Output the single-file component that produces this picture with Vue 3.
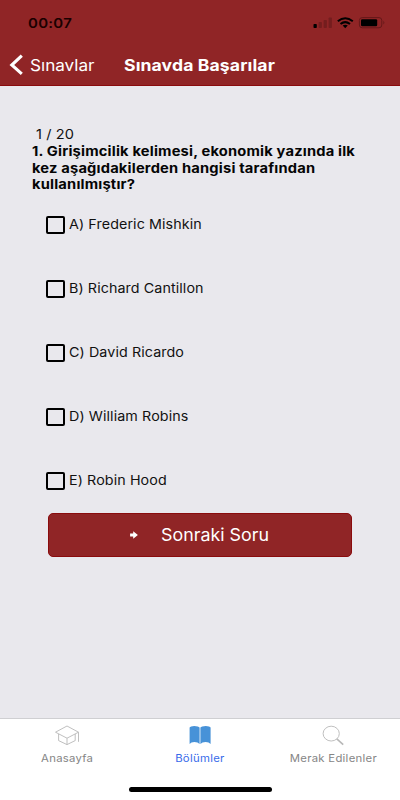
<script setup>
const options = [
  { key: 'A', text: 'A) Frederic Mishkin' },
  { key: 'B', text: 'B) Richard Cantillon' },
  { key: 'C', text: 'C) David Ricardo' },
  { key: 'D', text: 'D) William Robins' },
  { key: 'E', text: 'E) Robin Hood' },
]
</script>

<template>
  <div class="screen">
    <header class="header">
      <div class="status">
        <span class="time">00:07</span>
        <svg class="signals" width="74" height="14" viewBox="0 0 74 14">
          <rect x="0.5" y="7" width="3.3" height="4" rx="0.8" fill="#000" />
          <g fill="#741d1e">
            <rect x="5.6" y="5" width="3.3" height="6" rx="0.8" />
            <rect x="10.6" y="3" width="3.3" height="8" rx="0.8" />
            <rect x="15.6" y="0.5" width="3.3" height="10.5" rx="0.8" />
          </g>
          <g fill="none" stroke="#000" stroke-width="2">
            <path d="M24.8 4.2 Q32.2 -1.6 39.8 4.2" />
            <path d="M27.5 7 Q32.2 3.2 37 7" />
          </g>
          <path d="M29.7 8.6 Q32.2 6.9 34.8 8.6 L32.2 11.3Z" fill="#000" />
          <rect x="46.4" y="0.6" width="22.4" height="10.2" rx="2.8" fill="none" stroke="#651819" />
          <rect x="48" y="2.2" width="16.2" height="7" rx="1.2" fill="#000" />
          <path d="M70.4 3.8 Q72.4 5.7 70.4 7.6Z" fill="#651819" />
        </svg>
      </div>
      <div class="nav">
        <svg class="chevron" width="15" height="22" viewBox="0 0 15 22">
          <path d="M12.8 1.6 L2.8 11 L12.8 19.8" fill="none" stroke="#fff" stroke-width="3.1" />
        </svg>
        <span class="back">Sınavlar</span>
        <span class="title">Sınavda Başarılar</span>
      </div>
    </header>

    <main class="content">
      <div class="counter">1 / 20</div>
      <div class="question">
        <div>1. Girişimcilik kelimesi, ekonomik yazında ilk</div>
        <div>kez aşağıdakilerden hangisi tarafından</div>
        <div>kullanılmıştır?</div>
      </div>
      <div class="options">
        <label v-for="o in options" :key="o.key" class="option">
          <span class="box"></span>
          <span class="label">{{ o.text }}</span>
        </label>
      </div>
      <button class="next">
        <svg width="8" height="8" viewBox="0 0 8 8">
          <path d="M0.1 2.6 H3.2 V0.2 L7.9 4 L3.2 7.8 V5.4 H0.1Z" fill="#fff" />
        </svg>
        <span>Sonraki Soru</span>
      </button>
    </main>

    <footer class="tabs">
      <div class="tab-row">
        <div class="tab">
          <svg width="26" height="21" viewBox="0 0 26 21" fill="none" stroke="#b8b8b8" stroke-width="0.9" stroke-linejoin="round">
            <path d="M1.5 7.2 L13 1 L24.5 7.2 L13 13.2Z" />
            <path d="M4.6 9 V15.6 L13 19.6 L21.2 15.6 V9 M13 13.2 V19.6 M24.5 7.2 V16.8" />
          </svg>
          <span>Anasayfa</span>
        </div>
        <div class="tab active">
          <svg width="24" height="21" viewBox="0 0 24 21" fill="#4792d8">
            <path d="M1.6 2.6 Q2.4 1 6.2 1 Q10.6 1 11.6 2.6 V19 Q10 17 6.4 17 Q3 17 1.6 19Z" />
            <path d="M12.4 2.6 Q13.4 1 17.8 1 Q21.8 1 22.6 2.6 V19 Q21 17 17.6 17 Q14 17 12.4 19Z" />
          </svg>
          <span>Bölümler</span>
        </div>
        <div class="tab">
          <svg width="22" height="21" viewBox="0 0 22 21" fill="none" stroke="#b8b8b8">
            <ellipse cx="9.2" cy="8.6" rx="8.1" ry="7.4" stroke-width="0.9" />
            <path d="M14.8 13.8 L21.2 19.6" stroke-width="1.6" />
          </svg>
          <span>Merak Edilenler</span>
        </div>
      </div>
      <div class="home"></div>
    </footer>
  </div>
</template>

<style>
body {
  margin: 0;
}
</style>

<style scoped>
.screen {
  width: 400px;
  height: 800px;
  display: flex;
  flex-direction: column;
  overflow: hidden;
  background: #e9e8ed;
  color: #111;
  font-family: Inter, "Liberation Sans", sans-serif;
  white-space: nowrap;
}
.header {
  box-sizing: border-box;
  height: 86px;
  flex: none;
  background: #902526;
  border-bottom: 1px solid #8a0b0d;
}
.status {
  box-sizing: border-box;
  height: 44px;
  padding: 13px 0 0 28px;
  display: flex;
}
.time {
  width: 285px;
  height: 20px;
  line-height: 20px;
  font-size: 13px;
  font-weight: 600;
  letter-spacing: 0.25px;
  color: #1a0000;
  transform: scaleX(1.15);
  transform-origin: 0 50%;
}
.signals {
  margin-top: 4px;
}
.nav {
  height: 42px;
  display: flex;
  align-items: center;
  color: #fff;
  line-height: 22px;
}
.chevron {
  margin-left: 9px;
}
.back {
  width: 94px;
  margin-left: 6px;
  font-size: 16px;
  transform: scaleX(1.07);
  transform-origin: 0 50%;
}
.title {
  font-size: 16px;
  font-weight: 700;
  letter-spacing: 0.1px;
  transform: scaleX(1.1);
  transform-origin: 0 50%;
}
.content {
  box-sizing: border-box;
  flex: 1;
  padding: 40px 32px 0;
  display: flex;
  flex-direction: column;
}
.counter {
  height: 17px;
  line-height: 17px;
  padding-left: 4px;
  font-size: 13px;
  letter-spacing: 0.1px;
  transform: scaleX(1.12);
  transform-origin: 4px 50%;
}
.question {
  height: 50px;
  line-height: 16.6px;
  font-size: 13px;
  font-weight: 700;
  letter-spacing: 0.16px;
  color: #050505;
  transform: scaleX(1.13);
  transform-origin: 0 50%;
}
.options {
  margin-left: 14px;
  padding-top: 22px;
}
.option {
  height: 20px;
  margin-bottom: 44px;
  display: flex;
  align-items: center;
}
.box {
  box-sizing: border-box;
  width: 19px;
  height: 18px;
  margin-right: 4px;
  border: 2px solid #000;
  border-radius: 2px;
}
.label {
  padding-bottom: 1px;
  font-size: 13px;
  line-height: 19px;
  letter-spacing: 0.08px;
  transform: scaleX(1.1);
  transform-origin: 0 50%;
}
.next {
  box-sizing: border-box;
  width: 304px;
  height: 44px;
  margin: -22px 0 0 16px;
  padding: 0 0 0 81px;
  display: flex;
  align-items: center;
  gap: 23px;
  background: #902526;
  border: 1px solid #8a0b0d;
  border-radius: 5px;
  color: #fff;
  font: 400 17px Inter, sans-serif;
}
.next svg {
  margin-bottom: 1px;
}
.next span {
  transform: scaleX(1.05);
  transform-origin: 0 50%;
}
.tabs {
  box-sizing: border-box;
  height: 82px;
  flex: none;
  background: #fff;
  border-top: 1px solid #cfcfd2;
}
.tab-row {
  height: 68px;
  display: grid;
  grid-template-columns: repeat(3, 133.33px);
}
.tab {
  padding-top: 6px;
  display: flex;
  flex-direction: column;
  align-items: center;
  color: #858585;
  font-size: 10.5px;
  line-height: 16px;
  letter-spacing: 0.25px;
}
.tab span {
  margin-top: 5px;
  transform: scaleX(1.08);
}
.active {
  color: #376bea;
}
.home {
  width: 143px;
  height: 5px;
  margin-left: 129px;
  border-radius: 3px;
  background: #000;
}
</style>
